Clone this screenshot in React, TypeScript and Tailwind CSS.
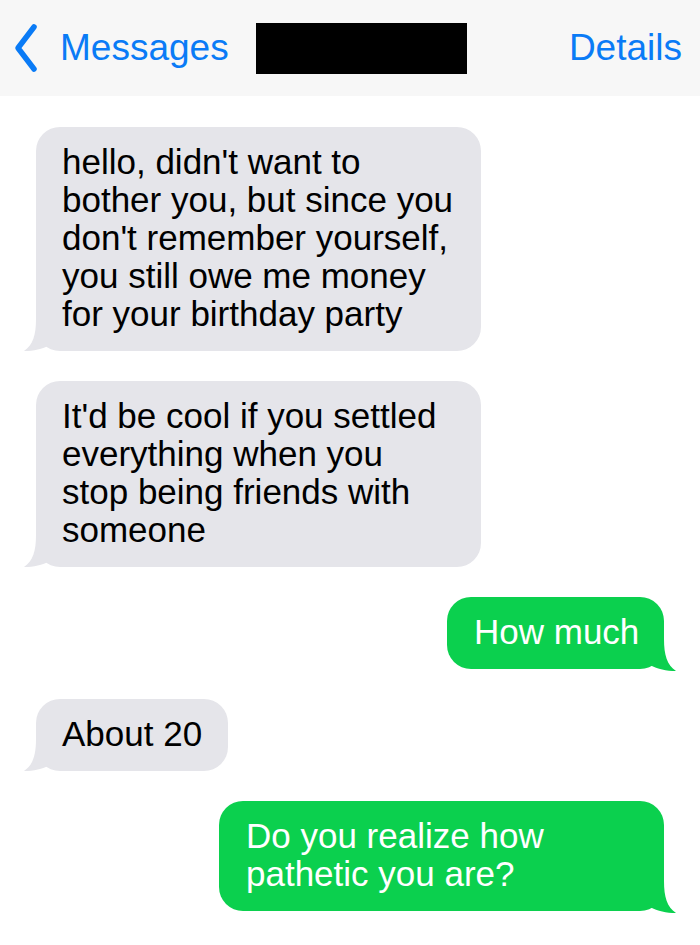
import React from "react";

const font = { fontFamily: '"Liberation Sans", Arial, Helvetica, sans-serif' };

function LeftTail() {
  return (
    <svg className="absolute bottom-0 left-[-12px]" width="40" height="32" viewBox="0 0 40 32">
      <path d="M12 0 C12 16 9 26 0 32 C10 32 18 30 26 26 L40 26 L40 0 Z" fill="#e5e5ea" />
    </svg>
  );
}

function RightTail() {
  return (
    <svg className="absolute bottom-[-2px] right-[-12px]" width="40" height="32" viewBox="0 0 40 32">
      <path d="M28 0 C28 16 31 26 40 32 C30 32 22 30 14 26 L0 26 L0 0 Z" fill="#0bd04e" />
    </svg>
  );
}

function Gray({ children, w }: { children: React.ReactNode; w: string }) {
  return (
    <div className={`relative ${w} self-start ml-[36px] rounded-[24px] bg-[#e5e5ea] pl-[26px] pr-[16px] pt-[16px] pb-[18px] text-[35px] leading-[38px] text-black`}>
      <LeftTail />
      <span className="relative">{children}</span>
    </div>
  );
}

function Green({ children, w }: { children: React.ReactNode; w: string }) {
  return (
    <div className={`relative ${w} self-end mr-[36px] rounded-[24px] bg-[#0bd04e] pl-[27px] pr-[16px] pt-[16px] pb-[18px] text-[35px] leading-[38px] text-white`}>
      <RightTail />
      <span className="relative">{children}</span>
    </div>
  );
}

export default function App() {
  return (
    <div className="w-[700px] h-[945px] bg-white overflow-hidden" style={font}>
      <div className="h-[96px] bg-[#f7f7f7] flex items-center text-[#0a7bf6] text-[37px]">
        <svg className="ml-[13px]" width="26" height="50" viewBox="0 0 26 50">
          <path d="M21 4 L5 25 L21 46" fill="none" stroke="#0a7bf6" strokeWidth="5.5" strokeLinecap="round" strokeLinejoin="round" />
        </svg>
        <span className="ml-[21px] leading-none pb-[2px]">Messages</span>
        <div className="ml-[27px] w-[211px] h-[51px] bg-black" />
        <span className="ml-auto mr-[18px] leading-none pb-[2px]">Details</span>
      </div>
      <div className="flex flex-col gap-[30px] pt-[31px]">
        <Gray w="w-[445px]">
          hello, didn't want to<br />bother you, but since you<br />don't remember yourself,<br />you still owe me money<br />for your birthday party
        </Gray>
        <Gray w="w-[445px]">
          It'd be cool if you settled<br />everything when you<br />stop being friends with<br />someone
        </Gray>
        <Green w="w-[217px]">How much</Green>
        <Gray w="w-[192px]">About 20</Gray>
        <Green w="w-[445px]">
          Do you realize how<br />pathetic you are?
        </Green>
      </div>
    </div>
  );
}
